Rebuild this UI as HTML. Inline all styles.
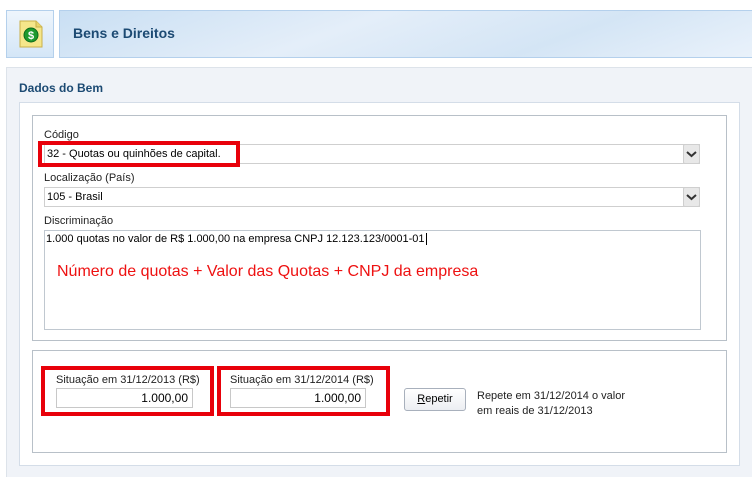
<!DOCTYPE html>
<html><head><meta charset="utf-8"><style>
*{margin:0;padding:0;box-sizing:border-box}
body{width:752px;height:477px;position:relative;background:#fff;font-family:"Liberation Sans",Arial,sans-serif;font-size:11px;color:#000;overflow:hidden}
.a{position:absolute}
.hdr{background:linear-gradient(160deg,#c9dff3 0%,#e4eef9 40%,#d4e5f5 70%,#eaf2fb 100%);border:1px solid #b4d0ec}
.lbl{font-size:11px;color:#222}
.sel{background:#fff;border:1px solid #cfcfcf;height:20px;font-size:11px;line-height:18px;padding-left:2px}
.arr{position:absolute;right:-1px;top:-1px;width:17px;height:20px;border:1px solid #cfcfcf;background:#e8e8e8;border-radius:2px;text-align:center}
.red{border:4px solid #e8000a}
.inp{background:#fff;border:1px solid #c8c8c8;height:20px;text-align:right;padding-right:4px;font-family:"Liberation Sans",Arial,sans-serif;font-size:12px;line-height:18px}
</style></head><body>
<div class="a hdr" style="left:6px;top:10px;width:48px;height:48px;background:linear-gradient(#eef5fc,#d4e6f7)">
 <svg width="48" height="48" viewBox="0 0 48 48" style="position:absolute;left:0;top:0">
  <path d="M13 10h16l6 6v20H13z" fill="#f5e68a" stroke="#c9b04a"/>
  <path d="M29 10v6h6" fill="#e9d46a" stroke="#c9b04a"/>
  <circle cx="24" cy="24" r="7" fill="#1e9a2e" stroke="#0d6a1a"/>
  <text x="24" y="28" font-size="11" font-weight="bold" fill="#fff" text-anchor="middle" font-family="Liberation Sans">$</text>
 </svg>
</div>
<div class="a hdr" style="left:59px;top:10px;width:700px;height:48px"></div>
<div class="a" style="left:73px;top:25px;font-size:14px;font-weight:bold;color:#1c4a73">Bens e Direitos</div>
<div class="a" style="left:6px;top:67px;width:746px;height:410px;background:#f0f3f8;border-left:1px solid #dde3ea;border-top:1px solid #dde3ea"></div>
<div class="a" style="left:19px;top:81px;font-size:12px;font-weight:bold;color:#1c4a73">Dados do Bem</div>
<div class="a" style="left:19px;top:102px;width:721px;height:364px;background:#fff;border:1px solid #d4dde8"></div>
<div class="a" style="left:32px;top:115px;width:695px;height:226px;border:1px solid #b8c0c8"></div>
<div class="a lbl" style="left:44px;top:129px">Código</div>
<div class="a sel" style="left:44px;top:144px;width:656px">32 - Quotas ou quinhões de capital.<div class="arr"><svg width="15" height="18"><path d="M3 7l4.5 4 4.5-4" stroke="#333" stroke-width="2" fill="none"/></svg></div></div>
<div class="a red" style="left:38px;top:141px;width:202px;height:26px"></div>
<div class="a lbl" style="left:44px;top:172px">Localização (País)</div>
<div class="a sel" style="left:44px;top:187px;width:656px">105 - Brasil<div class="arr"><svg width="15" height="18"><path d="M3 7l4.5 4 4.5-4" stroke="#333" stroke-width="2" fill="none"/></svg></div></div>
<div class="a lbl" style="left:44px;top:215px">Discriminação</div>
<div class="a" style="left:44px;top:230px;width:657px;height:100px;border:1px solid #c0c8d0;background:#fff"></div>
<div class="a" style="left:46px;top:233px;font-size:11px">1.000 quotas no valor de R$ 1.000,00 na empresa CNPJ 12.123.123/0001-01<span style="border-left:1px solid #000;margin-left:1px"> </span></div>
<div class="a" style="left:57px;top:263px;font-size:16px;color:#ee1111">Número de quotas + Valor das Quotas + CNPJ da empresa</div>
<div class="a" style="left:32px;top:350px;width:695px;height:103px;border:1px solid #b8c0c8"></div>
<div class="a red" style="left:41px;top:366px;width:173px;height:50px"></div>
<div class="a lbl" style="left:56px;top:374px">Situação em 31/12/2013 (R$)</div>
<div class="a inp" style="left:56px;top:388px;width:137px">1.000,00</div>
<div class="a red" style="left:217px;top:366px;width:173px;height:50px"></div>
<div class="a lbl" style="left:230px;top:374px">Situação em 31/12/2014 (R$)</div>
<div class="a inp" style="left:230px;top:388px;width:136px">1.000,00</div>
<div class="a" style="left:404px;top:388px;width:62px;height:23px;border:1px solid #a8b0bc;border-radius:3px;background:linear-gradient(#fff,#eceef2);text-align:center;line-height:21px;font-size:11px"><u>R</u>epetir</div>
<div class="a" style="left:477px;top:389px;font-size:11px;line-height:15px;color:#222">Repete em 31/12/2014 o valor<br>em reais de 31/12/2013</div>
</body></html>
